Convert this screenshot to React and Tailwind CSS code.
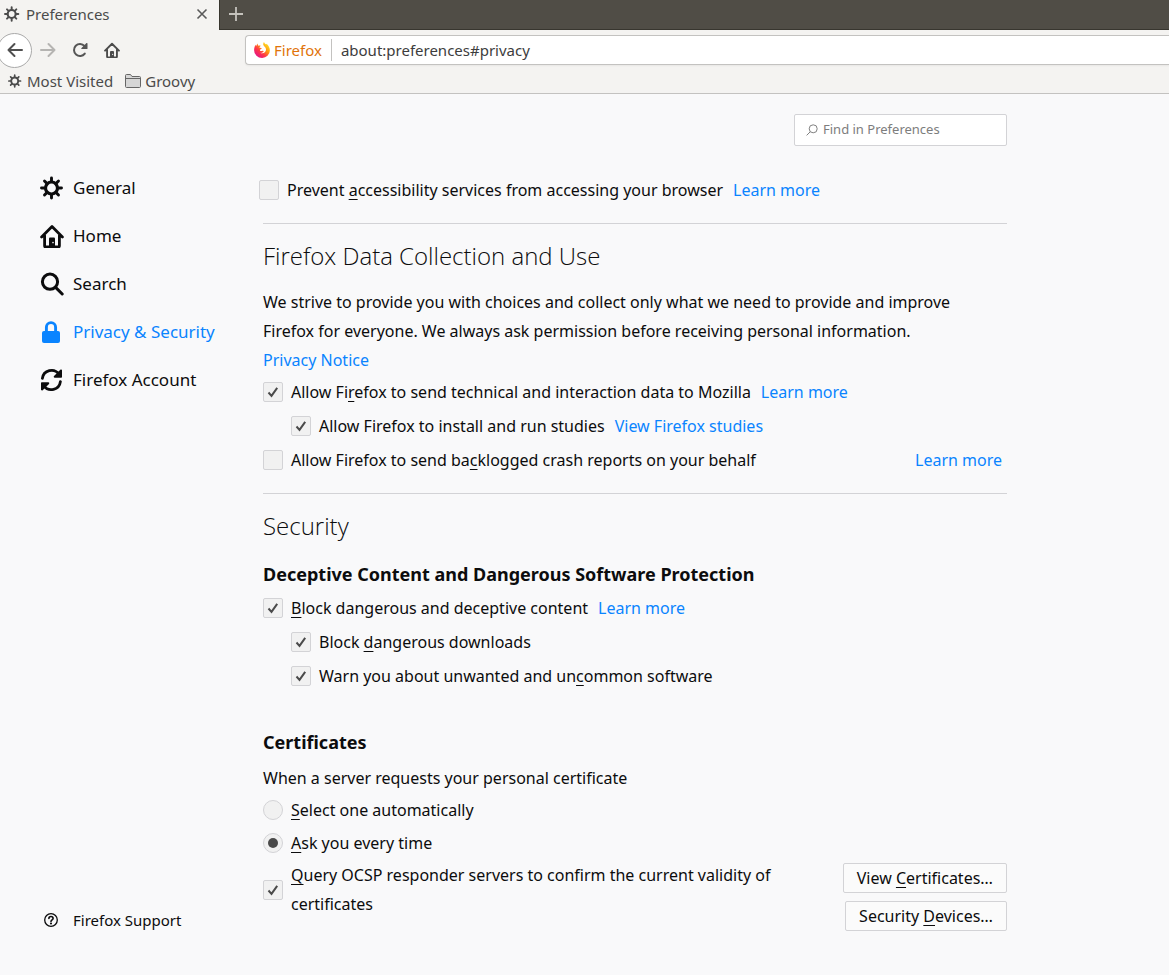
import React from "react";

function Gear({ className }) {
  return (
    <svg viewBox="0 0 24 24" className={className} fill="none" stroke="currentColor" strokeLinecap="round" aria-hidden="true">
      <circle cx="11.500" cy="12" r="6" strokeWidth="3.200" />
      <path
        strokeWidth="2.900"
        d="M11.500 2v3.500M11.500 18.500v3.500M1.500 12H5M18 12h3.500M4.500 5l2.400 2.400M16.100 16.600l2.400 2.400M4.500 19l2.400-2.400M16.100 7.400L18.500 5"
      />
    </svg>
  );
}

function House({ className }) {
  return (
    <svg viewBox="0 0 24 24" className={className} fill="none" stroke="currentColor" strokeWidth="2.8" strokeLinecap="round" strokeLinejoin="round" aria-hidden="true">
      <path d="M1.600 13L12 2.600 22.400 13M4.600 11.500v10.200c0 .8.5 1.300 1.300 1.300h12.200c.8 0 1.300-.5 1.300-1.300V11.500" />
      <path fill="currentColor" stroke="none" d="M9 23v-8.200c0-.8.6-1.300 1.300-1.300h3.400c.7 0 1.300.5 1.300 1.300V23z" />
      <circle cx="13" cy="18.600" r=".8" fill="#f9f9fa" stroke="none" />
    </svg>
  );
}

function Magnifier({ className }) {
  return (
    <svg viewBox="0 0 24 24" className={className} fill="none" stroke="currentColor" strokeWidth="3" strokeLinecap="round" aria-hidden="true">
      <circle cx="10" cy="9.700" r="7.600" />
      <path d="M15.600 15.400l6.600 6.600" />
    </svg>
  );
}

function Padlock({ className }) {
  return (
    <svg viewBox="0 0 24 24" className={className} aria-hidden="true">
      <path d="M6.400 12V7.200a4.600 4.600 0 0 1 9.200 0V12" fill="none" stroke="currentColor" strokeWidth="2.900" />
      <rect x="2" y="11" width="18" height="12" rx="2" fill="currentColor" />
    </svg>
  );
}

function Sync({ className }) {
  return (
    <svg viewBox="0 0 24 24" className={className} fill="none" stroke="currentColor" strokeWidth="2.800" strokeLinecap="round" aria-hidden="true">
      <path d="M2.400 10.400A9.200 9.200 0 0 1 19 6.200M20.400 13.600A9.200 9.200 0 0 1 3.800 17.800" />
      <path fill="currentColor" stroke="none" d="M22 2.400v6.300c0 .6-.4 1-1 1h-6.300c-.9 0-1.300-1-.7-1.600l6.300-6.300c.6-.6 1.700-.3 1.700.6zM1 21.600v-6.300c0-.6.4-1 1-1h6.300c.9 0 1.300 1 .7 1.600l-6.300 6.300c-.6.6-1.700.3-1.700-.6z" />
    </svg>
  );
}

function FirefoxLogo({ className }) {
  return (
    <svg viewBox="0 0 16 16" className={className} aria-hidden="true">
      <defs>
        <linearGradient id="flame" x1="0.850" y1="0.100" x2="0.150" y2="0.900">
          <stop offset="0" stopColor="#ffe226" />
          <stop offset="0.350" stopColor="#ff980e" />
          <stop offset="0.650" stopColor="#ff3647" />
          <stop offset="1" stopColor="#e31587" />
        </linearGradient>
      </defs>
      <path
        fill="url(#flame)"
        d="M10 0c.3 1.300 1.200 1.900 2.200 2.500l.3-.8c2 1.600 3.400 4 3.400 6.700A7.800 7.800 0 0 1 8 16 7.900 7.900 0 0 1 .1 8.200C.1 6 .7 4 1.700 2.700L2 4.200 3.500 1.600l.6 2.100c1-.3 2-.2 2.700.2-.9.400-1.300 1-1.300 1.800l2.200.3c0 .8-.9 1.300-1.600 1.600v1.300c1 .3 1.700.2 2.400-.1.700-.3 1.500.2 1.100.8-.8 1-2 1.500-3.400 1.200 2.600 1.400 6-.3 5.800-3.500C11.900 5 9.500 4.200 9.200 2.500 9.100 1.500 9.400.7 10 0z"
      />
    </svg>
  );
}

function Tick() {
  return (
    <svg viewBox="0 0 20 20" className="pointer-events-none col-start-1 row-start-1 hidden size-5 peer-checked:block" fill="none" stroke="#4a4a4a" aria-hidden="true">
      <path d="M5.500 10.500l3 3.300 5.700-8" strokeWidth="2" />
    </svg>
  );
}

function Check({ id, checked = false, className = "", link, spread = false, children }) {
  return (
    <div className={`flex min-h-[34px] items-center ${className}`}>
      <span className="grid shrink-0">
        <input
          id={id}
          type="checkbox"
          defaultChecked={checked}
          className="peer col-start-1 row-start-1 size-5 appearance-none rounded-xs border border-[#d3d3d6] bg-[#f1f1f1]"
        />
        <Tick />
      </span>
      <label htmlFor={id} className="ml-2">{children}</label>
      {link && (
        <a href="#more" className={spread ? "mr-[5px] ml-auto text-[#0a84ff]" : "ml-[10px] text-[#0a84ff]"}>{link}</a>
      )}
    </div>
  );
}

function Radio({ id, checked = false, children }) {
  return (
    <div className="flex h-[33px] items-center">
      <span className="grid shrink-0 place-items-center">
        <input
          id={id}
          type="radio"
          name="certificate"
          defaultChecked={checked}
          className="peer col-start-1 row-start-1 size-5 appearance-none rounded-full border border-[#d3d3d6] bg-[#f1f1f1]"
        />
        <span className="pointer-events-none col-start-1 row-start-1 hidden size-[10px] rounded-full bg-[#4a4a4a] peer-checked:block" />
      </span>
      <label htmlFor={id} className="ml-2">{children}</label>
    </div>
  );
}

function Key({ children }) {
  return <span className="underline decoration-1 underline-offset-3">{children}</span>;
}

const categories = [
  { name: "General", Icon: Gear },
  { name: "Home", Icon: House },
  { name: "Search", Icon: Magnifier },
  { name: "Privacy & Security", Icon: Padlock, active: true },
  { name: "Firefox Account", Icon: Sync },
];

function BrowserChrome() {
  return (
    <header className="border-b border-[#c3c2c0] bg-[#f4f3f1] text-[15px] text-[#4b4b4b]">
      <div className="flex h-[30px] bg-[#504d46]">
        <div className="flex w-[219px] items-center bg-[#f4f3f1] pb-[2px] pl-1">
          <Gear className="size-4" />
          <span className="ml-[6px]">Preferences</span>
          <button aria-label="Close tab" className="mr-[11px] ml-auto">
            <svg viewBox="0 0 12 12" className="size-3" fill="none" stroke="#5a5a5a" strokeWidth="1.600"><path d="M1.500 1.500l9 9M10.500 1.500l-9 9" /></svg>
          </button>
        </div>
        <div className="flex flex-1 items-center border-b border-l border-[#38362f] pb-[2px] pl-2">
          <button aria-label="New tab">
            <svg viewBox="0 0 16 16" className="size-4" fill="none" stroke="#c5c3bd" strokeWidth="1.800"><path d="M8 1v14M1 8h14" /></svg>
          </button>
        </div>
      </div>
      <div className="flex h-10 items-center">
        <div className="flex w-[245px] items-center">
          <button aria-label="Back" className="-ml-[3px] flex size-[35px] items-center justify-center rounded-full border border-[#a9a9a9] bg-white">
            <svg viewBox="0 0 16 16" className="size-4" fill="none" stroke="#4f4f4f" strokeWidth="2" strokeLinecap="round" strokeLinejoin="round"><path d="M15 8H1.500M7.500 2L1.500 8l6 6" /></svg>
          </button>
          <button aria-label="Forward" className="ml-2">
            <svg viewBox="0 0 16 16" className="size-4" fill="none" stroke="#b5b4b2" strokeWidth="2" strokeLinecap="round" strokeLinejoin="round"><path d="M1 8h13.500M8.500 2l6 6-6 6" /></svg>
          </button>
          <button aria-label="Reload" className="ml-4">
            <svg viewBox="0 0 16 16" className="size-4" fill="none" stroke="#555" strokeWidth="2" strokeLinecap="round">
              <path d="M12.800 11.600A6 6 0 1 1 12.500 4" />
              <path fill="#555" stroke="none" d="M15.500 1.500v5c0 .4-.2.600-.6.600h-5c-.6 0-.8-.6-.4-1l5-5c.4-.4 1-.2 1 .4z" />
            </svg>
          </button>
          <button aria-label="Home" className="ml-4"><House className="size-4" /></button>
        </div>
        <div className="flex h-[30px] min-w-0 flex-1 items-center rounded-l border border-r-0 border-[#c3c2c0] bg-white pl-2 shadow-xs">
          <FirefoxLogo className="size-4 shrink-0" />
          <span className="ml-1 text-[#e1740a]">Firefox</span>
          <span className="mx-[9px] h-[22px] w-px bg-[#c3c2c0]" />
          <input aria-label="Address" defaultValue="about:preferences#privacy" className="min-w-0 flex-1 bg-transparent text-[#3d3d3d] outline-none" />
        </div>
      </div>
      <nav className="flex h-[23px] items-center pb-px pl-2">
        <a href="#visited" className="flex items-center"><Gear className="size-[14px]" /><span className="ml-[5px]">Most Visited</span></a>
        <a href="#groovy" className="ml-3 flex items-center">
          <svg viewBox="0 0 16 14" className="h-[14px] w-4" fill="none" stroke="#666"><path fill="#d6d6d6" d="M.5 12.500v-11c0-.6.4-1 1-1h4l1.500 2h7.500c.6 0 1 .4 1 1v9c0 .6-.4 1-1 1h-13c-.6 0-1-.4-1-1z" /><path d="M.5 4.500h15" /></svg>
          <span className="ml-1">Groovy</span>
        </a>
      </nav>
    </header>
  );
}

export default function App() {
  return (
    <div className="flex min-h-screen flex-col bg-[#f9f9fa] font-['Noto_Sans','Open_Sans',sans-serif] text-base text-[#0c0c0d]">
      <BrowserChrome />
      <div className="flex flex-1">
        <aside className="flex w-[263px] shrink-0 flex-col justify-between pt-[70px] pb-10 pl-10">
          <nav>
            {categories.map(({ name, Icon, active }) => (
              <a key={name} href="#category" className={`flex h-12 items-center text-[17px] ${active ? "text-[#0a84ff]" : ""}`}>
                <Icon className="size-6 shrink-0" />
                <span className="ml-[9px]">{name}</span>
              </a>
            ))}
          </nav>
          <a href="#support" className="flex items-center pl-1 text-[15px] leading-[30px]">
            <svg viewBox="0 0 16 16" className="size-[14px]" fill="none" stroke="currentColor" aria-hidden="true">
              <circle cx="8" cy="8" r="7.200" strokeWidth="1.500" />
              <path d="M5.600 6.300C5.600 4.900 6.600 4 8 4s2.400.9 2.400 2.200C10.400 7.700 8 7.900 8 9.600" strokeWidth="1.800" strokeLinecap="round" />
              <circle cx="8" cy="12" r="1.200" fill="currentColor" stroke="none" />
            </svg>
            <span className="ml-[15px]">Firefox Support</span>
          </a>
        </aside>

        <main className="max-w-[744px] flex-1 pt-5">
          <div className="ml-auto flex h-8 w-[213px] items-center rounded-xs border border-[#d3d3d6] bg-white pl-[11px] text-[13px]">
            <svg viewBox="0 0 12 12" className="size-3 shrink-0" fill="none" stroke="#808080" aria-hidden="true"><circle cx="7.200" cy="4.800" r="4" /><path d="M4.300 7.700L.6 11.400" /></svg>
            <input type="search" aria-label="Find in Preferences" placeholder="Find in Preferences" className="ml-[5px] min-w-0 flex-1 bg-transparent outline-none placeholder:text-[#7d7d7d]" />
          </div>

          <Check id="a11y" link="Learn more" className="mt-[27px] -ml-1">
            Prevent <Key>a</Key>ccessibility services from accessing your browser
          </Check>

          <hr className="mt-4 border-[#d3d3d6]" />

          <section>
            <h2 className="mt-4 font-['Open_Sans','Noto_Sans',sans-serif] text-2xl leading-8 font-light">Firefox Data Collection and Use</h2>
            <p className="mt-4 pr-8 leading-[29px]">
              We strive to provide you with choices and collect only what we need to provide and improve Firefox for everyone. We always ask permission before receiving personal information.
              <a href="#notice" className="block text-[#0a84ff]">Privacy Notice</a>
            </p>
            <Check id="telemetry" checked link="Learn more">Allow Fi<Key>r</Key>efox to send technical and interaction data to Mozilla</Check>
            <Check id="studies" checked link="View Firefox studies" className="ml-7">Allow Firefox to install and run studies</Check>
            <Check id="crash" link="Learn more" spread>Allow Firefox to send ba<Key>c</Key>klogged crash reports on your behalf</Check>
          </section>

          <hr className="mt-4 border-[#d3d3d6]" />

          <section>
            <h2 className="mt-4 font-['Open_Sans','Noto_Sans',sans-serif] text-2xl leading-8 font-light">Security</h2>
            <h3 className="mt-[18px] text-lg leading-7 font-bold">Deceptive Content and Dangerous Software Protection</h3>
            <div className="mt-[3px]">
              <Check id="block" checked link="Learn more"><Key>B</Key>lock dangerous and deceptive content</Check>
              <Check id="downloads" checked className="ml-7">Block <Key>d</Key>angerous downloads</Check>
              <Check id="uncommon" checked className="ml-7">Warn you about unwanted and un<Key>c</Key>ommon software</Check>
            </div>

            <h3 className="mt-[35px] text-lg leading-7 font-bold">Certificates</h3>
            <p className="mt-2 leading-[29px]">When a server requests your personal certificate</p>
            <Radio id="auto"><Key>S</Key>elect one automatically</Radio>
            <Radio id="ask" checked><Key>A</Key>sk you every time</Radio>
            <div className="mt-[2px] flex items-start justify-between">
              <Check id="ocsp" checked className="max-w-[540px] leading-[29px]">
                <Key>Q</Key>uery OCSP responder servers to confirm the current validity of certificates
              </Check>
              <div className="mt-[2px] flex shrink-0 flex-col items-end gap-2">
                <button className="h-[30px] rounded-xs border border-[#d3d3d6] bg-[#fbfbfb] px-[13px]">View <Key>C</Key>ertificates…</button>
                <button className="h-[30px] rounded-xs border border-[#d3d3d6] bg-[#fbfbfb] px-[13px]">Security <Key>D</Key>evices…</button>
              </div>
            </div>
          </section>
        </main>
      </div>
    </div>
  );
}
